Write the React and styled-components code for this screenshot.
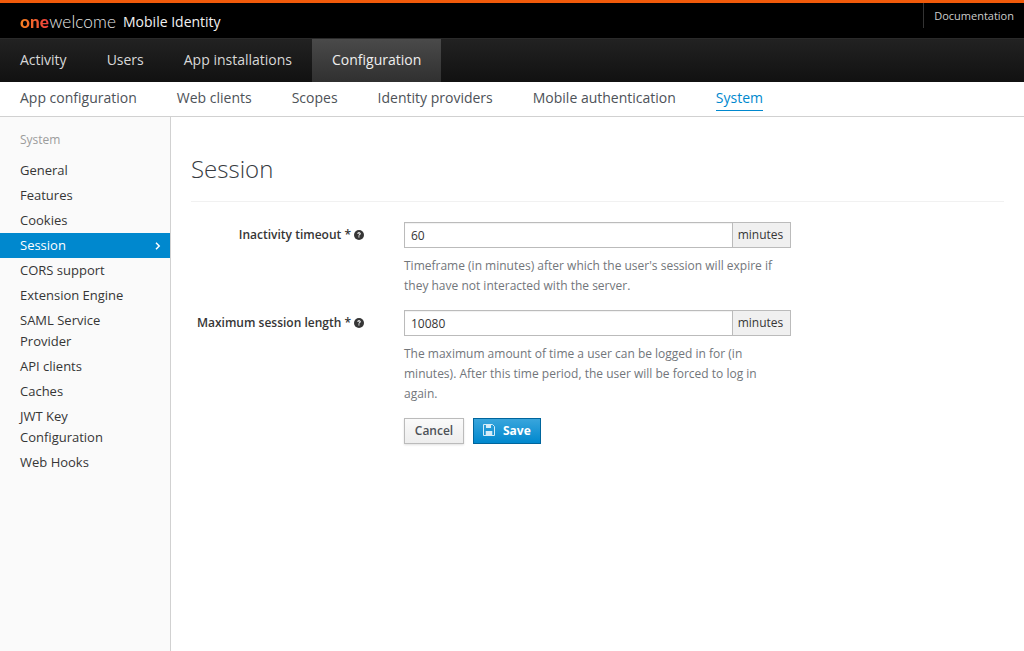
import React from "react";
import styled, { createGlobalStyle } from "styled-components";

const Global = createGlobalStyle`
  html, body { margin: 0; padding: 0; height: 100%; background: #fff; }
  body { font-family: "Open Sans", "Liberation Sans", sans-serif; color: #333; overflow: hidden; }
  * { box-sizing: border-box; }
`;
const Page = styled.div`display: flex; flex-direction: column; height: 651px;`;
const TopBar = styled.header`
  height: 38px; background: #000; border-top: 3px solid #f15a0a;
  display: flex; justify-content: space-between; flex-shrink: 0;
`;
const Brand = styled.div`display: flex; align-items: center; padding-left: 20px; height: 35px; padding-top: 1px;`;
const Logo = styled.span`
  font-family: Lato, sans-serif; font-size: 17.2px; font-weight: 300; color: #e8e8e8; letter-spacing: 0.1px;
`;
const LogoOne = styled.span`
  font-weight: 900;
  background: linear-gradient(90deg, #f58220, #ee3d3d);
  -webkit-background-clip: text; background-clip: text; color: transparent;
`;
const Product = styled.span`font-size: 14px; font-weight: 500; color: #f2f2f2; margin-left: 7px;`;
const DocLink = styled.a`
  height: 25px; border-left: 1px solid #333; margin-right: 10px; padding: 0 0 0 10px;
  font-size: 11px; line-height: 26px; color: #ccc;
`;
const MainNav = styled.nav`
  height: 44px; display: flex; flex-shrink: 0;
  background: linear-gradient(#222, #111); border-top: 1px solid #2a2a2a;
`;
const MainItem = styled.a`
  padding: 0 20px; font-size: 14px; line-height: 41px; color: ${p => p.$active ? "#eee" : "#d8d8d8"};
  background: ${p => p.$active ? "linear-gradient(#4a4a4a, #303030)" : "transparent"};
`;
const SubNav = styled.nav`
  height: 35px; display: flex; gap: 40px; padding-left: 20px; flex-shrink: 0;
  border-bottom: 1px solid #d1d1d1; background: #fff;
`;
const SubItem = styled.a`
  font-size: 14px; height: 29px; line-height: 31px;
  color: ${p => p.$active ? "#0088ce" : "#4d5258"};
  border-bottom: ${p => p.$active ? "1px solid #0088ce" : "none"};
`;
const Body = styled.div`display: flex; flex: 1; min-height: 0;`;
const Side = styled.aside`
  width: 171px; flex-shrink: 0; background: #fafafa; border-right: 1px solid #d1d1d1; padding-top: 13px;
`;
const SideTitle = styled.div`font-size: 12px; line-height: 20px; color: #9c9c9c; padding: 0 20px; margin-bottom: 8px;`;
const SideItem = styled.a`
  display: flex; justify-content: space-between; align-items: center;
  padding: 2px 9px 2px 20px; font-size: 13px; line-height: 21px; width: 170px;
  color: ${p => p.$active ? "#fff" : "#363636"};
  background: ${p => p.$active ? "#0088ce" : "transparent"};
`;
const SideText = styled.span`max-width: 110px;`;
const Content = styled.main`flex: 1; padding: 0 20px;`;
const Title = styled.h1`
  font-size: 24px; font-weight: 300; color: #363a3f; margin: 35px 0 0; line-height: 33px;
  padding-bottom: 16px; border-bottom: 1px solid #f1f1f1;
`;
const Form = styled.div`padding-top: 20px;`;
const Row = styled.div`display: grid; grid-template-columns: 173px 387px; column-gap: 40px; margin-bottom: 14px;`;
const Label = styled.label`
  display: flex; justify-content: flex-end; align-items: center; gap: 3px;
  height: 25px; font-size: 12px; font-weight: 600; color: #363636;
`;
const InputGroup = styled.div`display: flex; height: 26px;`;
const Input = styled.div`
  flex: 1; border: 1px solid #bbb; border-right: none; font-size: 12px; line-height: 25px; padding: 0 6px; color: #363636;
  box-shadow: inset 0 1px 1px rgba(0,0,0,.06);
`;
const Addon = styled.div`
  width: 59px; border: 1px solid #bbb; background: #f0f0f0; text-align: center; font-size: 12px; line-height: 23px; color: #363636;
  padding-right: 2px;
`;
const Help = styled.p`margin: 8px 0 0; font-size: 12px; line-height: 20px; color: #72767b;`;
const Buttons = styled.div`display: flex; gap: 9px; margin-left: 213px;`;
const Cancel = styled.button`
  width: 60px; height: 26px; font: 600 12px "Open Sans", sans-serif; color: #4d5258; padding: 0 0 2px;
  border: 1px solid #bbb; background: linear-gradient(#fafafa, #ededed); box-shadow: 0 1px 2px rgba(0,0,0,.12);
`;
const Save = styled.button`
  width: 68px; height: 26px; font: 700 12px "Open Sans", sans-serif; color: #fff; padding: 0 0 2px 9px;
  border: 1px solid #00659c; background: linear-gradient(#39a5dc, #0088ce);
  display: flex; align-items: center; gap: 8px;
`;
const Hint = () => (
  <svg width="10" height="10" viewBox="0 0 20 20" aria-hidden="true">
    <circle cx="10" cy="10" r="10" fill="#363636" />
    <path d="M6.6 7.6c.2-1.9 1.6-2.9 3.5-2.9 2 0 3.4 1.2 3.4 2.8 0 1.3-.7 2-1.7 2.6-.8.5-1 .8-1 1.6H8.9c0-1.4.3-2 1.3-2.7.8-.5 1.2-.8 1.2-1.4 0-.6-.5-1-1.3-1-.9 0-1.3.4-1.4 1.2z" fill="#fff" />
    <rect x="8.8" y="12.6" width="2.1" height="2.3" fill="#fff" />
  </svg>
);
const Chevron = () => (
  <svg width="6" height="8" viewBox="0 0 6 8" aria-hidden="true">
    <path d="M1 .8 4.2 4 1 7.2" fill="none" stroke="#fff" strokeWidth="1.5" />
  </svg>
);
const Floppy = () => (
  <svg width="12" height="12" viewBox="0 0 12 12" aria-hidden="true">
    <path d="M.5.5h9l2 2v9H.5z" fill="none" stroke="#d4ecf8" />
    <path d="M3 1h5v3H3zM2.7 7h6.6v4H2.7z" fill="#d4ecf8" />
  </svg>
);

const main = ["Activity", "Users", "App installations", "Configuration"];
const sub = ["App configuration", "Web clients", "Scopes", "Identity providers", "Mobile authentication", "System"];
const side = ["General", "Features", "Cookies", "Session", "CORS support", "Extension Engine", "SAML Service Provider", "API clients", "Caches", "JWT Key Configuration", "Web Hooks"];

export default function App() {
  return (
    <Page>
      <Global />
      <TopBar>
        <Brand>
          <Logo><LogoOne>one</LogoOne>welcome</Logo>
          <Product>Mobile Identity</Product>
        </Brand>
        <DocLink>Documentation</DocLink>
      </TopBar>
      <MainNav>
        {main.map(m => <MainItem key={m} $active={m === "Configuration"}>{m}</MainItem>)}
      </MainNav>
      <SubNav>
        {sub.map(s => <SubItem key={s} $active={s === "System"}>{s}</SubItem>)}
      </SubNav>
      <Body>
        <Side>
          <SideTitle>System</SideTitle>
          {side.map(s => (
            <SideItem key={s} $active={s === "Session"}>
              <SideText>{s}</SideText>
              {s === "Session" && <Chevron />}
            </SideItem>
          ))}
        </Side>
        <Content>
          <Title>Session</Title>
          <Form>
            <Row>
              <Label>Inactivity timeout * <Hint /></Label>
              <div>
                <InputGroup><Input>60</Input><Addon>minutes</Addon></InputGroup>
                <Help>Timeframe (in minutes) after which the user's session will expire if they have not interacted with the server.</Help>
              </div>
            </Row>
            <Row>
              <Label>Maximum session length * <Hint /></Label>
              <div>
                <InputGroup><Input>10080</Input><Addon>minutes</Addon></InputGroup>
                <Help>The maximum amount of time a user can be logged in for (in minutes). After this time period, the user will be forced to log in again.</Help>
              </div>
            </Row>
            <Buttons>
              <Cancel>Cancel</Cancel>
              <Save><Floppy />Save</Save>
            </Buttons>
          </Form>
        </Content>
      </Body>
    </Page>
  );
}
